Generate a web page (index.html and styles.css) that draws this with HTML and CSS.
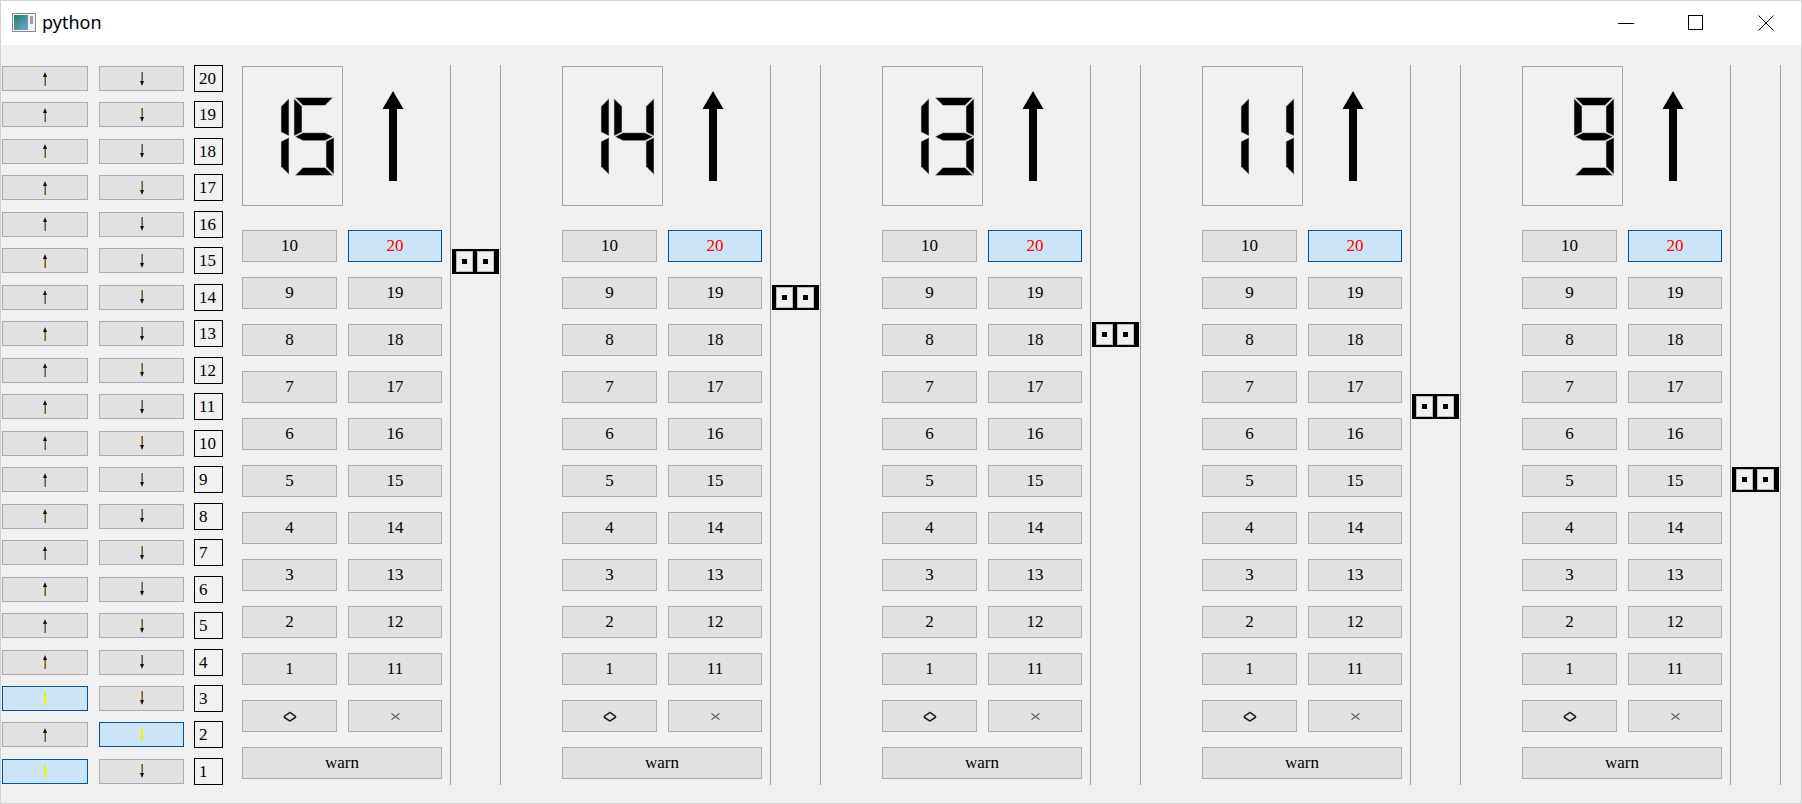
FILE: index.html
```html
<!DOCTYPE html>
<html>
<head>
<meta charset="utf-8">
<title>python</title>
<link rel="stylesheet" href="styles.css">
</head>
<body>
<div class="window">
  <div class="titlebar">
    <svg class="app-icon" width="24" height="19" viewBox="0 0 24 19">
      <defs><linearGradient id="ig" x1="0" y1="0" x2="1" y2="1"><stop offset="0" stop-color="#2d7a62"/><stop offset="1" stop-color="#6aaed6"/></linearGradient></defs>
      <rect x="0.5" y="0.5" width="23" height="18" fill="#f2f2f2" stroke="#8c8c8c"/>
      <rect x="2" y="2" width="14" height="15" fill="url(#ig)"/>
      <rect x="18" y="3" width="3" height="8" fill="#a0a0a0"/>
    </svg>
    <span class="title">python</span>
    <div class="caption">
      <div class="cap-btn"><svg width="16" height="16" viewBox="0 0 16 16"><line x1="0" y1="8.5" x2="16" y2="8.5" stroke="#000" stroke-width="1"/></svg></div>
      <div class="cap-btn"><svg width="16" height="16" viewBox="0 0 16 16"><rect x="0.5" y="0.5" width="14" height="14" fill="none" stroke="#000" stroke-width="1"/></svg></div>
      <div class="cap-btn"><svg width="16" height="16" viewBox="0 0 16 16"><line x1="0.5" y1="0.5" x2="15.5" y2="15.5" stroke="#000" stroke-width="1"/><line x1="15.5" y1="0.5" x2="0.5" y2="15.5" stroke="#000" stroke-width="1"/></svg></div>
    </div>
  </div>

  <div class="content">
    <div class="floors">
      <div class="frow"><div class="fbtn"><span class="arr"></span></div><div class="fbtn down"><span class="arr dn"></span></div><div class="fnum">20</div></div>
      <div class="frow"><div class="fbtn"><span class="arr"></span></div><div class="fbtn down"><span class="arr dn"></span></div><div class="fnum">19</div></div>
      <div class="frow"><div class="fbtn"><span class="arr"></span></div><div class="fbtn down"><span class="arr dn"></span></div><div class="fnum">18</div></div>
      <div class="frow"><div class="fbtn"><span class="arr"></span></div><div class="fbtn down"><span class="arr dn"></span></div><div class="fnum">17</div></div>
      <div class="frow"><div class="fbtn"><span class="arr"></span></div><div class="fbtn down"><span class="arr dn"></span></div><div class="fnum">16</div></div>
      <div class="frow"><div class="fbtn"><span class="arr"></span></div><div class="fbtn down"><span class="arr dn"></span></div><div class="fnum">15</div></div>
      <div class="frow"><div class="fbtn"><span class="arr"></span></div><div class="fbtn down"><span class="arr dn"></span></div><div class="fnum">14</div></div>
      <div class="frow"><div class="fbtn"><span class="arr"></span></div><div class="fbtn down"><span class="arr dn"></span></div><div class="fnum">13</div></div>
      <div class="frow"><div class="fbtn"><span class="arr"></span></div><div class="fbtn down"><span class="arr dn"></span></div><div class="fnum">12</div></div>
      <div class="frow"><div class="fbtn"><span class="arr"></span></div><div class="fbtn down"><span class="arr dn"></span></div><div class="fnum">11</div></div>
      <div class="frow"><div class="fbtn"><span class="arr"></span></div><div class="fbtn down"><span class="arr dn"></span></div><div class="fnum">10</div></div>
      <div class="frow"><div class="fbtn"><span class="arr"></span></div><div class="fbtn down"><span class="arr dn"></span></div><div class="fnum">9</div></div>
      <div class="frow"><div class="fbtn"><span class="arr"></span></div><div class="fbtn down"><span class="arr dn"></span></div><div class="fnum">8</div></div>
      <div class="frow"><div class="fbtn"><span class="arr"></span></div><div class="fbtn down"><span class="arr dn"></span></div><div class="fnum">7</div></div>
      <div class="frow"><div class="fbtn"><span class="arr"></span></div><div class="fbtn down"><span class="arr dn"></span></div><div class="fnum">6</div></div>
      <div class="frow"><div class="fbtn"><span class="arr"></span></div><div class="fbtn down"><span class="arr dn"></span></div><div class="fnum">5</div></div>
      <div class="frow"><div class="fbtn"><span class="arr"></span></div><div class="fbtn down"><span class="arr dn"></span></div><div class="fnum">4</div></div>
      <div class="frow"><div class="fbtn lit"><span class="arr"></span></div><div class="fbtn down"><span class="arr dn"></span></div><div class="fnum">3</div></div>
      <div class="frow"><div class="fbtn"><span class="arr"></span></div><div class="fbtn down lit"><span class="arr dn"></span></div><div class="fnum">2</div></div>
      <div class="frow"><div class="fbtn lit"><span class="arr"></span></div><div class="fbtn down"><span class="arr dn"></span></div><div class="fnum">1</div></div>
    </div>

    <!-- Elevator 1 : floor 15 -->
    <div class="panel">
      <div class="main">
        <div class="top">
          <div class="lcd">
            <svg width="99" height="138" viewBox="0 0 99 138">
              <g transform="translate(6,30.5)" class="seg">
                <polygon points="40,1 40,38.5 32,34.5 32,9"/>
                <polygon points="40,40 40,77 32,69 32,44"/>
              </g>
              <g transform="translate(51,30.5)" class="seg">
                <polygon points="1,0 39,0 31,8 9,8"/>
                <polygon points="0,1 8,9 8,34.5 0,38.5"/>
                <polygon points="1,39.2 9,35.2 31,35.2 39,39.2 31,43.2 9,43.2"/>
                <polygon points="40,40 40,77 32,69 32,44"/>
                <polygon points="9,70 31,70 39,78 1,78"/>
              </g>
            </svg>
          </div>
          <div class="dir"><svg width="99" height="140" viewBox="0 0 99 140"><polygon points="50,25 60.5,43 54,43 54,115 46,115 46,43 39.5,43" fill="#000"/></svg></div>
        </div>
        <div class="keys">
          <div class="key">10</div><div class="key lit">20</div>
          <div class="key">9</div><div class="key">19</div>
          <div class="key">8</div><div class="key">18</div>
          <div class="key">7</div><div class="key">17</div>
          <div class="key">6</div><div class="key">16</div>
          <div class="key">5</div><div class="key">15</div>
          <div class="key">4</div><div class="key">14</div>
          <div class="key">3</div><div class="key">13</div>
          <div class="key">2</div><div class="key">12</div>
          <div class="key">1</div><div class="key">11</div>
          <div class="key"><span class="sym-open">&lt;&gt;</span></div><div class="key"><span class="sym-close">&gt;&lt;</span></div>
          <div class="key wide">warn</div>
        </div>
      </div>
      <div class="rail">
        <div class="door" style="margin-top:184px"><span class="cell"><i></i></span><span class="cell"><i></i></span></div>
      </div>
    </div>

    <!-- Elevator 2 : floor 14 -->
    <div class="panel">
      <div class="main">
        <div class="top">
          <div class="lcd">
            <svg width="99" height="138" viewBox="0 0 99 138">
              <g transform="translate(6,30.5)" class="seg">
                <polygon points="40,1 40,38.5 32,34.5 32,9"/>
                <polygon points="40,40 40,77 32,69 32,44"/>
              </g>
              <g transform="translate(51,30.5)" class="seg">
                <polygon points="0,1 8,9 8,34.5 0,38.5"/>
                <polygon points="1,39.2 9,35.2 31,35.2 39,39.2 31,43.2 9,43.2"/>
                <polygon points="40,1 40,38.5 32,34.5 32,9"/>
                <polygon points="40,40 40,77 32,69 32,44"/>
              </g>
            </svg>
          </div>
          <div class="dir"><svg width="99" height="140" viewBox="0 0 99 140"><polygon points="50,25 60.5,43 54,43 54,115 46,115 46,43 39.5,43" fill="#000"/></svg></div>
        </div>
        <div class="keys">
          <div class="key">10</div><div class="key lit">20</div>
          <div class="key">9</div><div class="key">19</div>
          <div class="key">8</div><div class="key">18</div>
          <div class="key">7</div><div class="key">17</div>
          <div class="key">6</div><div class="key">16</div>
          <div class="key">5</div><div class="key">15</div>
          <div class="key">4</div><div class="key">14</div>
          <div class="key">3</div><div class="key">13</div>
          <div class="key">2</div><div class="key">12</div>
          <div class="key">1</div><div class="key">11</div>
          <div class="key"><span class="sym-open">&lt;&gt;</span></div><div class="key"><span class="sym-close">&gt;&lt;</span></div>
          <div class="key wide">warn</div>
        </div>
      </div>
      <div class="rail">
        <div class="door" style="margin-top:220px"><span class="cell"><i></i></span><span class="cell"><i></i></span></div>
      </div>
    </div>

    <!-- Elevator 3 : floor 13 -->
    <div class="panel">
      <div class="main">
        <div class="top">
          <div class="lcd">
            <svg width="99" height="138" viewBox="0 0 99 138">
              <g transform="translate(6,30.5)" class="seg">
                <polygon points="40,1 40,38.5 32,34.5 32,9"/>
                <polygon points="40,40 40,77 32,69 32,44"/>
              </g>
              <g transform="translate(51,30.5)" class="seg">
                <polygon points="1,0 39,0 31,8 9,8"/>
                <polygon points="40,1 40,38.5 32,34.5 32,9"/>
                <polygon points="1,39.2 9,35.2 31,35.2 39,39.2 31,43.2 9,43.2"/>
                <polygon points="40,40 40,77 32,69 32,44"/>
                <polygon points="9,70 31,70 39,78 1,78"/>
              </g>
            </svg>
          </div>
          <div class="dir"><svg width="99" height="140" viewBox="0 0 99 140"><polygon points="50,25 60.5,43 54,43 54,115 46,115 46,43 39.5,43" fill="#000"/></svg></div>
        </div>
        <div class="keys">
          <div class="key">10</div><div class="key lit">20</div>
          <div class="key">9</div><div class="key">19</div>
          <div class="key">8</div><div class="key">18</div>
          <div class="key">7</div><div class="key">17</div>
          <div class="key">6</div><div class="key">16</div>
          <div class="key">5</div><div class="key">15</div>
          <div class="key">4</div><div class="key">14</div>
          <div class="key">3</div><div class="key">13</div>
          <div class="key">2</div><div class="key">12</div>
          <div class="key">1</div><div class="key">11</div>
          <div class="key"><span class="sym-open">&lt;&gt;</span></div><div class="key"><span class="sym-close">&gt;&lt;</span></div>
          <div class="key wide">warn</div>
        </div>
      </div>
      <div class="rail">
        <div class="door" style="margin-top:257px"><span class="cell"><i></i></span><span class="cell"><i></i></span></div>
      </div>
    </div>

    <!-- Elevator 4 : floor 11 -->
    <div class="panel">
      <div class="main">
        <div class="top">
          <div class="lcd">
            <svg width="99" height="138" viewBox="0 0 99 138">
              <g transform="translate(6,30.5)" class="seg">
                <polygon points="40,1 40,38.5 32,34.5 32,9"/>
                <polygon points="40,40 40,77 32,69 32,44"/>
              </g>
              <g transform="translate(51,30.5)" class="seg">
                <polygon points="40,1 40,38.5 32,34.5 32,9"/>
                <polygon points="40,40 40,77 32,69 32,44"/>
              </g>
            </svg>
          </div>
          <div class="dir"><svg width="99" height="140" viewBox="0 0 99 140"><polygon points="50,25 60.5,43 54,43 54,115 46,115 46,43 39.5,43" fill="#000"/></svg></div>
        </div>
        <div class="keys">
          <div class="key">10</div><div class="key lit">20</div>
          <div class="key">9</div><div class="key">19</div>
          <div class="key">8</div><div class="key">18</div>
          <div class="key">7</div><div class="key">17</div>
          <div class="key">6</div><div class="key">16</div>
          <div class="key">5</div><div class="key">15</div>
          <div class="key">4</div><div class="key">14</div>
          <div class="key">3</div><div class="key">13</div>
          <div class="key">2</div><div class="key">12</div>
          <div class="key">1</div><div class="key">11</div>
          <div class="key"><span class="sym-open">&lt;&gt;</span></div><div class="key"><span class="sym-close">&gt;&lt;</span></div>
          <div class="key wide">warn</div>
        </div>
      </div>
      <div class="rail">
        <div class="door" style="margin-top:329px"><span class="cell"><i></i></span><span class="cell"><i></i></span></div>
      </div>
    </div>

    <!-- Elevator 5 : floor 9 -->
    <div class="panel">
      <div class="main">
        <div class="top">
          <div class="lcd">
            <svg width="99" height="138" viewBox="0 0 99 138">
              <g transform="translate(51,30.5)" class="seg">
                <polygon points="1,0 39,0 31,8 9,8"/>
                <polygon points="0,1 8,9 8,34.5 0,38.5"/>
                <polygon points="40,1 40,38.5 32,34.5 32,9"/>
                <polygon points="1,39.2 9,35.2 31,35.2 39,39.2 31,43.2 9,43.2"/>
                <polygon points="40,40 40,77 32,69 32,44"/>
                <polygon points="9,70 31,70 39,78 1,78"/>
              </g>
            </svg>
          </div>
          <div class="dir"><svg width="99" height="140" viewBox="0 0 99 140"><polygon points="50,25 60.5,43 54,43 54,115 46,115 46,43 39.5,43" fill="#000"/></svg></div>
        </div>
        <div class="keys">
          <div class="key">10</div><div class="key lit">20</div>
          <div class="key">9</div><div class="key">19</div>
          <div class="key">8</div><div class="key">18</div>
          <div class="key">7</div><div class="key">17</div>
          <div class="key">6</div><div class="key">16</div>
          <div class="key">5</div><div class="key">15</div>
          <div class="key">4</div><div class="key">14</div>
          <div class="key">3</div><div class="key">13</div>
          <div class="key">2</div><div class="key">12</div>
          <div class="key">1</div><div class="key">11</div>
          <div class="key"><span class="sym-open">&lt;&gt;</span></div><div class="key"><span class="sym-close">&gt;&lt;</span></div>
          <div class="key wide">warn</div>
        </div>
      </div>
      <div class="rail">
        <div class="door" style="margin-top:402px"><span class="cell"><i></i></span><span class="cell"><i></i></span></div>
      </div>
    </div>
  </div>
</div>
</body>
</html>
```
FILE: styles.css
```css
* {
  box-sizing: border-box;
  margin: 0;
  padding: 0;
}

body {
  margin: 0;
  background: #ffffff;
  font-family: "Liberation Serif", "Times New Roman", serif;
  color: #000;
}

.window {
  width: 1802px;
  height: 804px;
  border: 1px solid #d2d2d2;
  background: #f0f0f0;
  display: flex;
  flex-direction: column;
  overflow: hidden;
}

/* ---------- title bar ---------- */
.titlebar {
  flex: none;
  height: 44px;
  background: #ffffff;
  display: flex;
  align-items: center;
}

.app-icon {
  margin-left: 11px;
  margin-top: -2px;
  flex: none;
}

.title {
  margin-left: 6px;
  margin-top: -2px;
  font-family: "Noto Sans", "Open Sans", sans-serif;
  font-size: 18px;
  color: #000;
}

.caption {
  margin-left: auto;
  display: flex;
  height: 100%;
}

.cap-btn {
  width: 70px;
  height: 100%;
  display: flex;
  align-items: center;
  justify-content: center;
}

/* ---------- content ---------- */
.content {
  flex: 1;
  display: flex;
  align-items: flex-start;
  padding: 20px 0 0 1px;
}

/* floor call buttons column */
.floors {
  flex: none;
  width: 221px;
  height: 718px;
  margin-top: 1px;
  margin-right: 19px;
  display: flex;
  flex-direction: column;
  justify-content: space-between;
}

.frow {
  height: 25px;
  display: flex;
  align-items: center;
}

.fbtn {
  width: 86px;
  height: 25px;
  background: #e1e1e1;
  border: 1px solid #adadad;
  display: flex;
  align-items: center;
  justify-content: center;
}

.fbtn.down {
  width: 85px;
  margin-left: 11px;
}

.fbtn.lit {
  background: #cce4f7;
  border-color: #005499;
}

.arr {
  display: flex;
  flex-direction: column;
  align-items: center;
  width: 6px;
  height: 14px;
}

.arr.dn {
  flex-direction: column-reverse;
}

.arr::before {
  content: "";
  width: 0;
  height: 0;
  border-left: 2px solid transparent;
  border-right: 2px solid transparent;
  border-bottom: 5px solid #111;
}

.arr.dn::before {
  border-bottom: none;
  border-top: 5px solid #111;
}

.arr::after {
  content: "";
  width: 2px;
  flex: 1;
  background: linear-gradient(90deg, #d88a32 50%, #5a5f6e 50%);
}

.lit .arr::before {
  border-bottom-color: #e8f000;
}

.lit .arr.dn::before {
  border-top-color: #e8f000;
}

.lit .arr::after {
  background: #f4f400;
}

.fnum {
  flex: none;
  width: 29px;
  height: 27px;
  margin-left: 10px;
  border: 1px solid #000;
  padding-left: 4px;
  font-size: 17px;
  line-height: 25px;
}

/* ---------- elevator panel ---------- */
.panel {
  flex: none;
  display: flex;
  align-items: flex-start;
  margin-right: 61px;
}

.panel:last-child {
  margin-right: 0;
}

.main {
  width: 200px;
  margin-top: 1px;
}

.top {
  display: flex;
  height: 140px;
}

.lcd {
  width: 101px;
  height: 140px;
  border: 1px solid #a6a6a6;
}

.lcd svg,
.dir svg {
  display: block;
}

.seg polygon {
  fill: #000;
  stroke: #d8d8d8;
  stroke-width: 0.6;
}

.dir {
  width: 99px;
  height: 140px;
}

.keys {
  margin-top: 24px;
  display: grid;
  grid-template-columns: 95px 94px;
  column-gap: 11px;
  row-gap: 15px;
}

.key {
  height: 32px;
  background: #e1e1e1;
  border: 1px solid #adadad;
  display: flex;
  align-items: center;
  justify-content: center;
  font-size: 17px;
  color: #000;
}

.key.lit {
  background: #cce4f7;
  border-color: #005499;
  color: #ff0000;
}

.key.wide {
  grid-column: 1 / 3;
}

.sym-open {
  display: inline-block;
  font-family: "DejaVu Sans", sans-serif;
  font-size: 20px;
  line-height: 1;
  letter-spacing: -4px;
  padding-right: 4px;
  transform: scaleX(0.5);
  color: #111;
}

.sym-close {
  display: inline-block;
  font-family: "DejaVu Sans", sans-serif;
  font-size: 14px;
  line-height: 1;
  letter-spacing: -2.8px;
  padding-right: 2.8px;
  transform: scaleX(0.45);
  color: #2d3f66;
}

/* position rail with door indicator */
.rail {
  flex: none;
  width: 51px;
  height: 720px;
  margin-left: 8px;
  border-left: 1px solid #a0a0a0;
  border-right: 1px solid #a0a0a0;
}

.door {
  width: 47px;
  height: 25px;
  margin-left: 1px;
  background: #000;
  display: flex;
  gap: 4px;
  padding: 2px 5px 2px 4px;
}

.cell {
  flex: 1;
  background: #f0f0f0;
  border: 1px solid #bdbdbd;
  display: flex;
  align-items: center;
  justify-content: center;
}

.cell i {
  width: 5px;
  height: 5px;
  background: #000;
}
```
